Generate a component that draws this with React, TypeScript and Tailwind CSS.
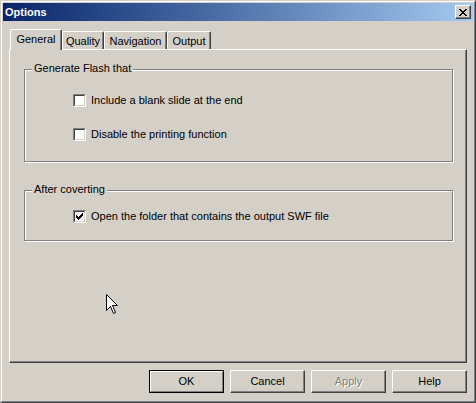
import React from 'react';

const raised = 'border border-t-white border-l-white border-r-[#404040] border-b-[#404040] shadow-[inset_-1px_-1px_0_#808080]';

const CloseGlyph = () => (
  <svg width="8" height="7" viewBox="0 0 8 7" shapeRendering="crispEdges">
    <rect x="0" y="0" width="2" height="1" fill="#000" />
    <rect x="6" y="0" width="2" height="1" fill="#000" />
    <rect x="1" y="1" width="2" height="1" fill="#000" />
    <rect x="5" y="1" width="2" height="1" fill="#000" />
    <rect x="2" y="2" width="4" height="1" fill="#000" />
    <rect x="3" y="3" width="2" height="1" fill="#000" />
    <rect x="2" y="4" width="4" height="1" fill="#000" />
    <rect x="1" y="5" width="2" height="1" fill="#000" />
    <rect x="5" y="5" width="2" height="1" fill="#000" />
    <rect x="0" y="6" width="2" height="1" fill="#000" />
    <rect x="6" y="6" width="2" height="1" fill="#000" />
  </svg>
);

const CheckGlyph = () => (
  <svg width="7" height="7" viewBox="0 0 7 7" shapeRendering="crispEdges">
    <rect x="6" y="0" width="1" height="1" fill="#000" />
    <rect x="5" y="1" width="2" height="1" fill="#000" />
    <rect x="0" y="2" width="1" height="1" fill="#000" />
    <rect x="4" y="2" width="3" height="1" fill="#000" />
    <rect x="0" y="3" width="2" height="1" fill="#000" />
    <rect x="3" y="3" width="3" height="1" fill="#000" />
    <rect x="0" y="4" width="5" height="1" fill="#000" />
    <rect x="1" y="5" width="3" height="1" fill="#000" />
    <rect x="2" y="6" width="1" height="1" fill="#000" />
  </svg>
);

const Checkbox = ({ label, checked }: { label: string; checked?: boolean }) => (
  <div className="flex items-center h-[13px] gap-[5px]">
    <div className="w-[13px] h-[13px] border border-t-[#808080] border-l-[#808080] border-r-white border-b-white">
      <div className="w-full h-full bg-white border border-t-[#404040] border-l-[#404040] border-r-[#d4d0c8] border-b-[#d4d0c8] p-[1px]">
        {checked && <CheckGlyph />}
      </div>
    </div>
    <span className="leading-[13px] whitespace-nowrap">{label}</span>
  </div>
);

const GroupBox = ({ title, className, children }: { title: string; className: string; children: React.ReactNode }) => (
  <div className={`relative w-[429px] ml-[14px] border border-[#808080] shadow-[1px_1px_0_#fff,inset_1px_1px_0_#fff] ${className}`}>
    <span className="absolute top-[-8px] left-[7px] px-[2px] bg-[#d4d0c8] leading-[13px] whitespace-nowrap">{title}</span>
    {children}
  </div>
);

const Tab = ({ label, selected, w }: { label: string; selected?: boolean; w: string }) => (
  <div
    className={`${w} flex items-center justify-center border border-b-0 border-t-white border-l-white border-r-[#404040] rounded-t-[2px] shadow-[inset_-1px_0_0_#808080] bg-[#d4d0c8] ${
      selected ? 'h-[21px] mb-[-1px] relative z-10 pb-[1px]' : 'h-[18px] pt-[1px]'
    }`}
  >
    {label}
  </div>
);

const Button = ({ label, isDefault, disabled }: { label: string; isDefault?: boolean; disabled?: boolean }) =>
  isDefault ? (
    <div className="w-[75px] h-[23px] border border-black">
      <div className="w-full h-full flex items-center justify-center border border-t-white border-l-white border-r-[#808080] border-b-[#808080]">
        {label}
      </div>
    </div>
  ) : (
    <div
      className={`w-[75px] h-[23px] flex items-center justify-center ${raised} ${
        disabled ? 'text-[#808080] [text-shadow:1px_1px_0_#fff]' : ''
      }`}
    >
      {label}
    </div>
  );

export default function App() {
  return (
    <div
      className="relative w-[476px] h-[403px] bg-[#d4d0c8] text-[11px] text-black border border-t-[#d4d0c8] border-l-[#d4d0c8] border-r-[#404040] border-b-[#404040] select-none"
      style={{ fontFamily: '"Liberation Sans", Arial, sans-serif' }}
    >
      <div className="w-full h-full border border-t-white border-l-white border-r-[#808080] border-b-[#808080] p-[1px] flex flex-col">
        {/* Title bar */}
        <div className="h-[18px] flex items-center justify-between bg-gradient-to-r from-[#0a246a] to-[#a6caf0] pl-[2px] pr-[2px]">
          <span className="text-white font-bold leading-none">Options</span>
          <div className={`w-[16px] h-[14px] bg-[#d4d0c8] flex items-center justify-center ${raised}`}>
            <CloseGlyph />
          </div>
        </div>

        {/* Body */}
        <div className="flex flex-col px-[6px] pt-[8px]">
          <div className="flex items-end h-[20px] pl-[1px]">
            <Tab label="General" selected w="w-[52px]" />
            <Tab label="Quality" w="w-[42px]" />
            <Tab label="Navigation" w="w-[63px]" />
            <Tab label="Output" w="w-[44px]" />
          </div>

          <div className={`h-[314px] border border-t-white border-l-white border-r-[#404040] border-b-[#404040] shadow-[inset_-1px_-1px_0_#808080] pt-[19px]`}>
            <GroupBox title="Generate Flash that" className="h-[93px] pt-[24px] pl-[48px]">
              <div className="flex flex-col gap-[21px]">
                <Checkbox label="Include a blank slide at the end" />
                <Checkbox label="Disable the printing function" />
              </div>
            </GroupBox>
            <GroupBox title="After coverting" className="h-[51px] mt-[28px] pt-[19px] pl-[48px]">
              <Checkbox label="Open the folder that contains the output SWF file" checked />
            </GroupBox>
          </div>

          <div className="flex justify-end gap-[6px] mt-[7px]">
            <Button label="OK" isDefault />
            <Button label="Cancel" />
            <Button label="Apply" disabled />
            <Button label="Help" />
          </div>
        </div>
      </div>

      {/* mouse pointer */}
      <svg className="absolute left-[105px] top-[293px]" width="13" height="21" viewBox="0 0 13 21">
        <path d="M0.5 0.5 L0.5 16.5 L4.5 12.5 L7.5 19.5 L9.5 18.5 L6.5 11.5 L11.5 11.5 Z" fill="#fff" stroke="#000" strokeWidth="1" />
      </svg>
    </div>
  );
}
